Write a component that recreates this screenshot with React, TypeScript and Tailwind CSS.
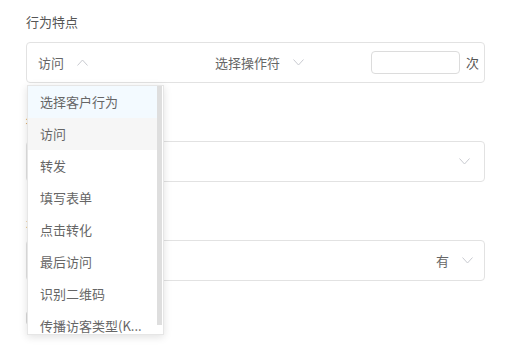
import React from "react";

const Chevron = ({ up = false }: { up?: boolean }) => (
  <svg width="11" height="7" viewBox="0 0 11 7" className="shrink-0">
    <polyline
      points={up ? "0.5,6.5 5.5,1 10.5,6.5" : "0.5,0.5 5.5,6 10.5,0.5"}
      fill="none"
      stroke="#c8cad0"
      strokeWidth="1"
    />
  </svg>
);

const items = [
  "选择客户行为",
  "访问",
  "转发",
  "填写表单",
  "点击转化",
  "最后访问",
  "识别二维码",
  "传播访客类型(K...",
];

export default function App() {
  return (
    <div
      className="w-[509px] h-[360px] bg-white overflow-hidden pl-[26px] pr-[24px] pt-[12px] text-[13px]"
      style={{ fontFamily: '"Noto Sans CJK SC", "Noto Sans", sans-serif' }}
    >
      <div className="h-[20px] leading-[20px] text-[#555]">行为特点</div>
      <div className="relative mt-[10px] h-[41px] border border-[#e2e2e2] rounded-[4px] flex items-center text-[#666]">
        <div className="flex items-center pl-[11px] w-[188px]">
          <span>访问</span>
          <span className="ml-[13px]">
            <Chevron up />
          </span>
        </div>
        <div className="flex items-center">
          <span>选择操作符</span>
          <span className="ml-[13px]">
            <Chevron />
          </span>
        </div>
        <div className="ml-auto flex items-center pr-[5px]">
          <div className="w-[89px] h-[23px] border border-[#dcdcdc] rounded-[4px]" />
          <span className="ml-[6px] text-[#555]">次</span>
        </div>

        <div className="absolute left-0 top-full mt-[3px] w-[137px] h-[250px] bg-white border border-[#e6e6e6] shadow-[0_2px_8px_rgba(0,0,0,0.12)] overflow-hidden z-10">
          <div className="w-[130px]">
            {items.map((t, i) => (
              <div
                key={t}
                className={
                  "h-[32px] leading-[32px] pl-[12px] text-[#666] whitespace-nowrap " +
                  (i === 0 ? "bg-[#f3faff]" : i === 1 ? "bg-[#f6f6f6]" : "")
                }
              >
                {t}
              </div>
            ))}
          </div>
          <div className="absolute right-[1px] top-0 w-[5px] h-[239px] bg-[#dedede]" />
        </div>
      </div>

      <div className="mt-[29px] h-[20px] leading-[20px] text-[#555]">行为次数</div>
      <div className="mt-[9px] h-[41px] border border-[#e2e2e2] rounded-[4px] flex items-center justify-end pr-[14px]">
        <Chevron />
      </div>

      <div className="mt-[29px] h-[20px] leading-[20px] text-[#555]">是否存在</div>
      <div className="mt-[9px] h-[41px] border border-[#e2e2e2] rounded-[4px] flex items-center justify-end pr-[11px] text-[#666]">
        <span>有</span>
        <span className="ml-[13px]">
          <Chevron />
        </span>
      </div>

      <div className="mt-[30px] w-[80px] h-[14px] border border-[#d8d8d8] rounded-[3px]" />
    </div>
  );
}
